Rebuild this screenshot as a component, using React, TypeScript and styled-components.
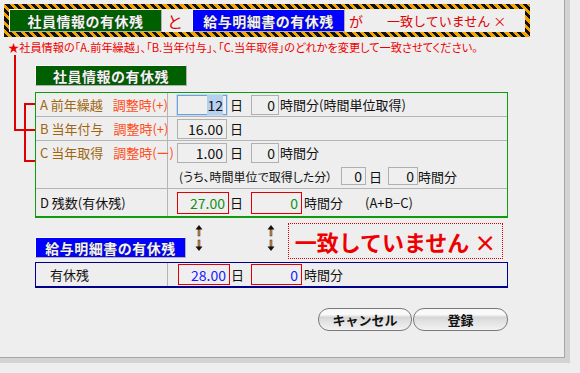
import styled, { createGlobalStyle } from "styled-components";

// Styles
const GlobalStyle = createGlobalStyle`
  body {
    margin: 0;
    background: #eeeeee;
    font-family: "Noto Sans CJK JP", "Noto Sans", sans-serif;
  }
`;

const Frame = styled.div`
  width: 570px;
  height: 363px;
  background: #d3d3d3;
`;

const Window = styled.div`
  width: 565px;
  height: 358px;
  box-sizing: border-box;
  background: #eeeeee;
  border-right: 1px solid #a6a6a6;
  border-bottom: 1px solid #a6a6a6;
  padding-top: 4px;
  display: flex;
  flex-direction: column;
`;

const Banner = styled.div`
  margin-left: 4px;
  width: 526px;
  height: 33px;
  padding: 5px;
  box-sizing: border-box;
  background: repeating-linear-gradient(45deg, #111 0 3px, #f5a500 3px 6px);
`;

const BannerInner = styled.div`
  height: 100%;
  background: #eeeeee;
  display: flex;
  align-items: center;
`;

const Tag = styled.div<{ $tone: "green" | "blue"; $w: number; $h: number }>`
  width: ${(p) => p.$w}px;
  height: ${(p) => p.$h}px;
  box-sizing: border-box;
  flex: none;
  display: flex;
  align-items: center;
  justify-content: center;
  background: ${(p) => (p.$tone === "green" ? "#006000" : "#0000ff")};
  color: #f2f2f2;
  font-size: 14px;
  font-weight: bold;
  letter-spacing: 0.5px;
  text-shadow: 0 0 1px #222;
  border: 1px solid #fafafa;
  border-right-color: #b0b0b0;
  border-bottom-color: #b0b0b0;
`;

const BannerWord = styled.span<{ $ml: number; $size: number }>`
  margin-left: ${(p) => p.$ml}px;
  font-size: ${(p) => p.$size}px;
  color: #e00000;
  white-space: nowrap;
`;

const Notice = styled.div`
  margin: 3px 0 0 8px;
  height: 15px;
  font-size: 11.2px;
  line-height: 15px;
  color: #f00000;
  font-feature-settings: "palt";
  white-space: nowrap;
`;

const Body = styled.div`
  display: flex;
`;

const Gutter = styled.div`
  width: 35px;
  flex: none;
`;

const Main = styled.div`
  width: 473px;
  display: flex;
  flex-direction: column;
  padding-top: 10px;
`;

const Table = styled.div<{ $line: string }>`
  box-sizing: border-box;
  width: 473px;
  border: 1px solid ${(p) => p.$line};
  border-bottom-width: 2px;
`;

const Row = styled.div`
  display: grid;
  grid-template-columns: 132px 1fr;
  & + & {
    border-top: 1px solid #b5b5b5;
  }
`;

const LabelCell = styled.div<{ $top?: boolean; $pad?: number }>`
  border-right: 1px solid #b5b5b5;
  padding-left: ${(p) => p.$pad ?? 4}px;
  display: flex;
  align-items: ${(p) => (p.$top ? "flex-start" : "center")};
  line-height: 23px;
  font-size: 13px;
  color: #111;
  white-space: nowrap;
`;

const ItemName = styled.span`
  color: #a0660f;
`;

const Adjust = styled.span`
  margin-left: 10px;
  color: #ff4d1a;
`;

const ValueCell = styled.div<{ $pad?: number }>`
  padding-left: ${(p) => p.$pad ?? 9}px;
  display: flex;
  flex-direction: column;
`;

const Line = styled.div<{ $h?: number }>`
  height: ${(p) => p.$h ?? 23}px;
  display: flex;
  align-items: center;
`;

const Field = styled.span<{
  $w: number;
  $h?: number;
  $kind?: "plain" | "alert" | "focus";
  $color?: string;
}>`
  width: ${(p) => p.$w}px;
  height: ${(p) => p.$h ?? 20}px;
  box-sizing: border-box;
  flex: none;
  display: inline-flex;
  align-items: center;
  justify-content: flex-end;
  padding-right: 3px;
  font-size: 14px;
  color: ${(p) => p.$color ?? "#111"};
  background: #efefef;
  border: 1px solid
    ${(p) =>
      p.$kind === "alert" ? "#e00000" : p.$kind === "focus" ? "#6f9fd6" : "#b0b0b0"};
  ${(p) => p.$kind === "focus" && "box-shadow: 0 0 0 1px #c4dbf3;"}
`;

const Selected = styled.span`
  background: #b4d0ee;
`;

const Unit = styled.span<{ $w?: number; $ml?: number }>`
  margin-left: ${(p) => p.$ml ?? 3}px;
  ${(p) => (p.$w ? `width: ${p.$w}px; flex: none;` : "")}
  font-size: 13px;
  color: #111;
  white-space: nowrap;
`;

const Note = styled(Unit)`
  font-size: 12px;
  font-feature-settings: "palt";
`;

const CompareRow = styled.div`
  height: 44px;
  display: flex;
  align-items: flex-start;
`;

const ArrowPair = styled.svg<{ $ml: number }>`
  margin: 7px 0 0 ${(p) => p.$ml}px;
  flex: none;
`;

const Mismatch = styled.div`
  margin: 5px 0 0 13px;
  width: 215px;
  height: 36px;
  box-sizing: border-box;
  border: 1px dotted #e00000;
  display: flex;
  align-items: center;
  justify-content: center;
  font-size: 22px;
  font-weight: bold;
  color: #ee0000;
  white-space: nowrap;
`;

const Buttons = styled.div`
  margin-top: 20px;
  display: flex;
  justify-content: flex-end;
  gap: 1px;
`;

const Button = styled.button<{ $w: number }>`
  width: ${(p) => p.$w}px;
  height: 23px;
  padding: 0;
  border: 1px solid #7a7a7a;
  border-radius: 11px;
  background: linear-gradient(
    #f7f7f7 0%,
    #fbfbfb 25%,
    #d6d6d6 40%,
    #e2e2e2 60%,
    #f2f2f2 100%
  );
  font-family: inherit;
  font-size: 13px;
  font-weight: bold;
  color: #111;
`;

const Arrows = ({ ml }: { ml: number }) => (
  <ArrowPair $ml={ml} width={8} height={26} viewBox="0 0 8 26">
    <rect x={3} y={4} width={2} height={7} fill="#d08a34" stroke="#333" strokeWidth={0.5} />
    <polygon points="4,0 0.5,4.5 7.5,4.5" fill="#111" />
    <rect x={3} y={15} width={2} height={7} fill="#d08a34" stroke="#333" strokeWidth={0.5} />
    <polygon points="0.5,21.5 7.5,21.5 4,26" fill="#111" />
  </ArrowPair>
);

const Connector = () => (
  <svg width={35} height={110} viewBox="0 0 35 110">
    <g stroke="#e00000" strokeWidth={2} fill="none">
      <path d="M15 0 V75 H35" />
      <path d="M35 49 H25 V106 H35" />
    </g>
  </svg>
);

const App = (): JSX.Element => {
  return (
    <>
      <GlobalStyle />
      <Frame>
        <Window>
          <Banner>
            <BannerInner>
              <Tag $tone="green" $w={153} $h={23}>
                社員情報の有休残
              </Tag>
              <BannerWord $ml={5} $size={16}>
                と
              </BannerWord>
              <BannerWord $ml={9} $size={14} as="div">
                <Tag $tone="blue" $w={153} $h={23}>
                  給与明細書の有休残
                </Tag>
              </BannerWord>
              <BannerWord $ml={4} $size={14}>
                が
              </BannerWord>
              <BannerWord $ml={24} $size={13}>
                一致していません ×
              </BannerWord>
            </BannerInner>
          </Banner>

          <Notice>
            ★社員情報の「A.前年繰越」、「B.当年付与」、「C.当年取得」のどれかを変更して一致させてください。
          </Notice>

          <Body>
            <Gutter>
              <Connector />
            </Gutter>
            <Main>
              <Tag $tone="green" $w={152} $h={21}>
                社員情報の有休残
              </Tag>

              <Table $line="#0f9a0f" style={{ marginTop: 6 }}>
                <Row>
                  <LabelCell>
                    <ItemName>A 前年繰越</ItemName>
                    <Adjust>調整時(+)</Adjust>
                  </LabelCell>
                  <ValueCell>
                    <Line>
                      <Field $w={50} $kind="focus">
                        <Selected>12</Selected>
                      </Field>
                      <Unit $w={21}>日</Unit>
                      <Field $w={28}>0</Field>
                      <Unit $ml={1}>時間分(時間単位取得)</Unit>
                    </Line>
                  </ValueCell>
                </Row>
                <Row>
                  <LabelCell>
                    <ItemName>B 当年付与</ItemName>
                    <Adjust>調整時(+)</Adjust>
                  </LabelCell>
                  <ValueCell>
                    <Line>
                      <Field $w={50}>16.00</Field>
                      <Unit>日</Unit>
                    </Line>
                  </ValueCell>
                </Row>
                <Row>
                  <LabelCell $top>
                    <ItemName>C 当年取得</ItemName>
                    <Adjust>調整時(ー)</Adjust>
                  </LabelCell>
                  <ValueCell>
                    <Line>
                      <Field $w={50}>1.00</Field>
                      <Unit $w={21}>日</Unit>
                      <Field $w={28}>0</Field>
                      <Unit $ml={1}>時間分</Unit>
                    </Line>
                    <Line $h={24}>
                      <Note $ml={2} $w={162}>
                        (うち、時間単位で取得した分）
                      </Note>
                      <Field $w={25} $h={18}>
                        0
                      </Field>
                      <Unit $w={19}>日</Unit>
                      <Field $w={30} $h={18}>
                        0
                      </Field>
                      <Unit $ml={0}>時間分</Unit>
                    </Line>
                  </ValueCell>
                </Row>
                <Row>
                  <LabelCell>D 残数(有休残)</LabelCell>
                  <ValueCell>
                    <Line $h={27}>
                      <Field $w={52} $h={22} $kind="alert" $color="#14901a">
                        27.00
                      </Field>
                      <Unit $ml={1} $w={21}>
                        日
                      </Unit>
                      <Field $w={51} $h={22} $kind="alert" $color="#14901a">
                        0
                      </Field>
                      <Unit $ml={2} $w={61}>
                        時間分
                      </Unit>
                      <Unit $ml={0}>(A+B−C)</Unit>
                    </Line>
                  </ValueCell>
                </Row>
              </Table>

              <CompareRow>
                <Tag $tone="blue" $w={151} $h={21} style={{ marginTop: 19 }}>
                  給与明細書の有休残
                </Tag>
                <Arrows ml={9} />
                <Arrows ml={64} />
                <Mismatch>一致していません ×</Mismatch>
              </CompareRow>

              <Table $line="#00008c">
                <Row>
                  <LabelCell $pad={14}>有休残</LabelCell>
                  <ValueCell $pad={10}>
                    <Line>
                      <Field $w={52} $h={21} $kind="alert" $color="#1a1aff">
                        28.00
                      </Field>
                      <Unit $ml={1} $w={20}>
                        日
                      </Unit>
                      <Field $w={51} $h={21} $kind="alert" $color="#1a1aff">
                        0
                      </Field>
                      <Unit $ml={2}>時間分</Unit>
                    </Line>
                  </ValueCell>
                </Row>
              </Table>

              <Buttons>
                <Button $w={94}>キャンセル</Button>
                <Button $w={95}>登録</Button>
              </Buttons>
            </Main>
          </Body>
        </Window>
      </Frame>
    </>
  );
};

export default App;
